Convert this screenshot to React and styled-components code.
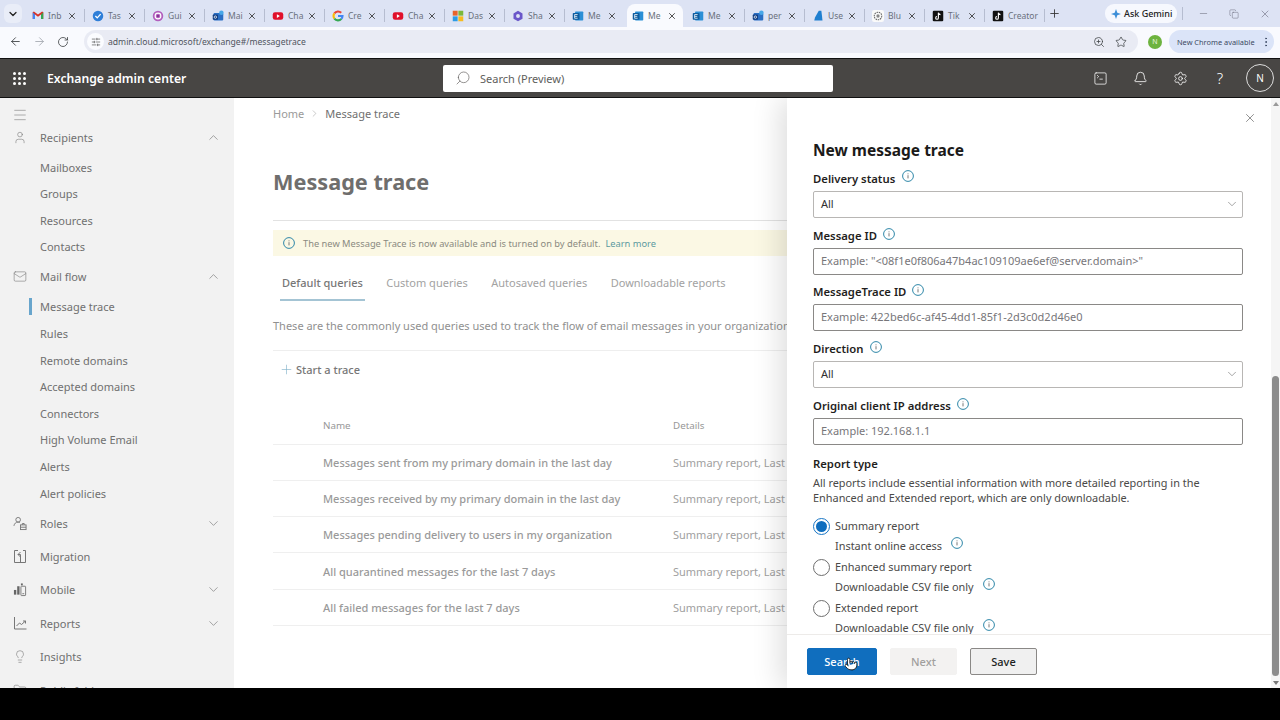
import React from "react";
import styled, { createGlobalStyle } from "styled-components";
import {
  ArrowLeft,
  ArrowRight,
  Bell,
  ChevronDown,
  ChevronUp,
  Copy,
  EllipsisVertical,
  Folder,
  Lightbulb,
  Mail,
  Menu,
  Minus,
  Plus,
  RotateCw,
  Search,
  Settings,
  SquareTerminal,
  Star,
  User,
  X,
  ZoomIn,
  ChevronRight,
  Pointer,
  SlidersHorizontal
} from "lucide-react";

const font = `"Noto Sans", "Open Sans", Arial, sans-serif`;

const GlobalStyle = createGlobalStyle`
  * {
    box-sizing: border-box;
  }

  html, body {
    margin: 0;
    height: 100%;
    overflow: hidden;
    background: #000;
  }

  body {
    font-family: ${font};
    font-size: 11px;
    color: #323130;
  }

  p, h1, h2 {
    margin: 0;
  }
`;

const Page = styled.div`
  display: flex;
  flex-direction: column;
  height: 720px;
  width: 1280px;
  background: #000;
`;

/* browser chrome */

const TabStrip = styled.div`
  align-items: flex-end;
  background: #dde3f4;
  display: flex;
  height: 27px;
  flex: none;
`;

const TabMenu = styled.div`
  align-items: center;
  align-self: center;
  background: #e9edf8;
  border-radius: 6px;
  color: #222;
  display: flex;
  height: 19px;
  justify-content: center;
  margin: 0 3px 0 4px;
  width: 18px;
`;

const Tab = styled.div`
  align-items: center;
  background: ${p => (p.$active ? "#f9fafe" : "transparent")};
  border-radius: 8px 8px 0 0;
  display: flex;
  height: 23px;
  margin-right: ${p => (p.$active ? "2px" : "0")};
  margin-left: ${p => (p.$active ? "2px" : "0")};
  padding-left: ${p => (p.$active ? "5px" : "7px")};
  position: relative;
  width: ${p => (p.$active ? "56px" : "60px")};

  &::after {
    background: #b6bdd0;
    content: "";
    display: ${p => (p.$sep ? "block" : "none")};
    height: 13px;
    position: absolute;
    right: 0;
    top: 5px;
    width: 1px;
  }
`;

const TabTitle = styled.span`
  color: #6a707c;
  font-size: 8.5px;
  margin-left: 4px;
  white-space: nowrap;
  width: ${p => (p.$wide ? "28px" : "13px")};
`;

const TabClose = styled(X)`
  color: #333;
  margin-left: 6px;
`;

const NewTab = styled.div`
  align-items: center;
  align-self: center;
  color: #333;
  display: flex;
  margin-left: 3px;
`;

const GeminiPill = styled.div`
  align-items: center;
  align-self: center;
  background: #f6f8fe;
  border-radius: 9px;
  color: #222;
  display: flex;
  font-size: 9px;
  font-weight: 500;
  gap: 3px;
  height: 19px;
  margin-left: 44px;
  padding-left: 6px;
  white-space: nowrap;
  width: 72px;
`;

const WindowButtons = styled.div`
  align-items: center;
  align-self: center;
  border-left: 1px solid #b6bdd0;
  color: #556;
  display: flex;
  gap: 20px;
  height: 13px;
  margin-left: 5px;
  padding-left: 15px;
`;

const Toolbar = styled.div`
  align-items: center;
  background: #f9fafe;
  display: flex;
  flex: none;
  height: 31px;
  padding: 3px 6px 5px 0;
`;

const NavButton = styled.div`
  color: ${p => (p.$off ? "#a4a8b0" : "#3c4043")};
  display: flex;
  justify-content: center;
  margin-left: ${p => (p.$first ? "3px" : "0")};
  width: 24px;
`;

const AddressBar = styled.div`
  align-items: center;
  background: #e9ebf4;
  border-radius: 12px;
  display: flex;
  flex: none;
  height: 23px;
  margin-left: 9px;
  padding-right: 11px;
  width: 1054px;
`;

const SiteInfo = styled.div`
  align-items: center;
  background: #fbfcff;
  border-radius: 50%;
  color: #444;
  display: flex;
  height: 17px;
  justify-content: center;
  margin: 0 4px 0 3px;
  width: 17px;
`;

const Url = styled.span`
  color: #50555e;
  flex: 1;
  font-size: 8.6px;
`;

const AddressIcon = styled.span`
  color: #3c4043;
  display: flex;
  margin-left: 10px;
`;

const ProfileDot = styled.div`
  align-items: center;
  background: #6db33f;
  border-radius: 50%;
  color: #e9f6df;
  display: flex;
  flex: none;
  font-size: 7px;
  height: 14px;
  justify-content: center;
  margin-left: 10px;
  width: 14px;
`;

const UpdatePill = styled.div`
  align-items: center;
  background: #dbe4f8;
  border-radius: 12px;
  color: #3b4a63;
  display: flex;
  flex: none;
  font-size: 7.4px;
  height: 23px;
  justify-content: space-between;
  margin-left: 7px;
  padding: 0 2px 0 8px;
  white-space: nowrap;
  width: 105px;
`;

/* exchange suite bar */

const SuiteBar = styled.header`
  align-items: center;
  background: #484644;
  border-bottom: 1px solid #111;
  border-top: 1px solid #111;
  color: #fff;
  display: flex;
  flex: none;
  height: 40px;
  position: relative;
`;

const Waffle = styled.div`
  display: grid;
  gap: 2px;
  grid-template-columns: repeat(3, 3px);
  margin-left: 13px;

  span {
    background: #fff;
    border-radius: 50%;
    height: 3px;
    width: 3px;
  }
`;

const AppName = styled.div`
  font-size: 12.2px;
  font-weight: 600;
  margin-left: 21px;
  width: 396px;
`;

const SearchBox = styled.div`
  align-items: center;
  background: #fff;
  border-radius: 2px;
  color: #605e5c;
  display: flex;
  font-size: 11px;
  gap: 9px;
  height: 27px;
  padding-left: 12px;
  width: 390px;
`;

const SearchGlass = styled(Search)`
  transform: scaleX(-1);
`;

const SuiteIcons = styled.div`
  align-items: center;
  display: flex;
  margin-left: auto;
  padding-right: 6px;
`;

const SuiteButton = styled.div`
  align-items: center;
  display: flex;
  font-size: 15px;
  font-weight: 300;
  justify-content: center;
  width: 40px;
`;

const Avatar = styled.div`
  align-items: center;
  border: 1px solid #ddd;
  border-radius: 50%;
  display: flex;
  font-size: 10px;
  height: 28px;
  justify-content: center;
  margin-left: 6px;
  width: 28px;
`;

/* page body */

const Body = styled.div`
  background: #fff;
  display: flex;
  flex: none;
  height: 590px;
  overflow: hidden;
  position: relative;
`;

const Sidebar = styled.nav`
  background: #f2f2f2;
  color: #707070;
  flex: none;
  height: 100%;
  overflow: hidden;
  width: 234px;
`;

const Burger = styled.div`
  color: #8a8a8a;
  height: 22.5px;
  padding: 9px 0 0 12px;
`;

const NavRow = styled.div`
  align-items: center;
  display: flex;
  height: 33.4px;
  padding: 0 13px 0 13px;
`;

const NavIcon = styled.span`
  color: #777;
  display: flex;
  justify-content: center;
  margin-right: 13px;
  width: 14px;
`;

const NavLabel = styled.span`
  flex: 1;
`;

const SubRow = styled.div`
  align-items: center;
  display: flex;
  height: 26.6px;
  padding-left: 29px;
`;

const ActiveMark = styled.span`
  background: ${p => (p.$on ? "#68a5cc" : "transparent")};
  height: 17px;
  margin-right: 8px;
  width: 3px;
`;

const Content = styled.main`
  flex: 1;
  min-width: 0;
  overflow: hidden;
  padding: 5px 0 0 39px;
  color: #7c7c7c;
`;

const Breadcrumb = styled.div`
  align-items: center;
  display: flex;
  gap: 5px;
  height: 20px;
  color: #8c8c8c;
`;

const Crumb = styled.span`
  color: ${p => (p.$current ? "#707070" : "#9a9a9a")};
`;

const PageTitle = styled.h1`
  color: #6f6e6d;
  font-size: 21.7px;
  font-weight: 700;
  line-height: 32px;
  margin-top: 43px;
`;

const Rule = styled.div`
  background: #e2e2e2;
  height: 1px;
`;

const TitleRule = styled(Rule)`
  margin-top: 22px;
`;

const Banner = styled.div`
  align-items: center;
  background: #fbf8e4;
  color: #8a8a80;
  display: flex;
  font-size: 9.3px;
  gap: 8px;
  height: 26px;
  margin-top: 9px;
  padding-left: 10px;
`;

const BannerLink = styled.span`
  color: #5b9a9f;
  margin-left: -3px;
`;

const Tabs = styled.div`
  display: flex;
  gap: 19.5px;
  margin-top: 14px;
  padding-left: 7px;
`;

const TabLink = styled.div`
  border-bottom: 2px solid ${p => (p.$active ? "#a4c4d4" : "transparent")};
  color: ${p => (p.$active ? "#777" : "#a2a2a2")};
  font-weight: ${p => (p.$active ? 500 : 400)};
  height: 31px;
  line-height: 26px;
  padding: 0 2px;
  white-space: nowrap;
`;

const Description = styled.p`
  line-height: 20px;
  margin-top: 15px;
  white-space: nowrap;
  color: #909090;
`;

const DescRule = styled(Rule)`
  background: #eee;
  margin-top: 14px;
`;

const StartTrace = styled.div`
  align-items: center;
  color: #777;
  display: flex;
  font-weight: 500;
  gap: 2px;
  height: 36px;
  padding-left: 6px;
`;

const TableRow = styled.div`
  align-items: center;
  border-bottom: 1px solid #efefef;
  display: grid;
  grid-template-columns: 350px 1fr;
  height: ${p => (p.$head ? "36.6px" : "36.3px")};
  padding-left: 50px;
  white-space: nowrap;
`;

const TableHead = styled(TableRow)`
  color: #979797;
  font-size: 9.8px;
  margin-top: 21px;
`;

const QueryName = styled.span`
  color: #9a9a9a;
  font-weight: 500;
`;

const QueryDetail = styled.span`
  color: #a0a0a0;
`;

/* side panel, it lies over the page */

const Panel = styled.aside`
  background: #fff;
  bottom: 0;
  box-shadow: -6px 0 28px rgba(0, 0, 0, 0.14);
  display: flex;
  left: 787px;
  position: absolute;
  right: 0;
  top: 0;
`;

const PanelMain = styled.div`
  display: flex;
  flex: 1;
  flex-direction: column;
  min-width: 0;
`;

const PanelBody = styled.div`
  flex: 1;
  min-height: 0;
  overflow: hidden;
  padding: 0 28px 0 26px;
`;

const CloseRow = styled.div`
  color: #444;
  display: flex;
  height: 38px;
  justify-content: flex-end;
  margin-right: -14px;
  padding-top: 13px;
`;

const PanelTitle = styled.h2`
  color: #1b1a19;
  font-size: 15.5px;
  font-weight: 700;
  line-height: 28px;
`;

const Field = styled.div`
  margin-top: ${p => (p.$first ? "3px" : "5.7px")};
`;

const LabelRow = styled.div`
  align-items: center;
  color: #1f1e1d;
  display: flex;
  font-size: 11.3px;
  font-weight: 600;
  gap: ${p => p.$gap || 6}px;
  height: 24px;
  padding-bottom: 1px;
`;

const InfoMark = styled.svg`
  flex: none;
  margin-top: ${p => p.$up || 0}px;
`;

const Control = styled.div`
  align-items: center;
  border: 1px solid ${p => (p.$select ? "#b8b6b4" : "#8a8886")};
  border-radius: 2px;
  color: ${p => (p.$select ? "#323130" : "#77767a")};
  display: flex;
  font-size: 11px;
  height: 27px;
  justify-content: space-between;
  padding: 0 3px 2px 7px;
  white-space: nowrap;
`;

const ReportHeading = styled.div`
  color: #1f1e1d;
  font-size: 11.3px;
  font-weight: 600;
  line-height: 20px;
  margin-top: 9px;
`;

const ReportText = styled.p`
  color: #4a4948;
  font-size: 10.9px;
  line-height: 15.4px;
  margin-top: 1px;
`;

const RadioGroup = styled.div`
  margin-top: 10px;
`;

const RadioOption = styled.div`
  display: grid;
  grid-template-columns: 17px 1fr;
  column-gap: 5px;
  height: 41px;
`;

const RadioDot = styled.span`
  align-items: center;
  border: 1px solid ${p => (p.$on ? "#1976c5" : "#6e6e6e")};
  border-radius: 50%;
  display: flex;
  height: 17px;
  justify-content: center;
  margin-top: 2px;
  width: 17px;

  &::after {
    background: #106ebe;
    border-radius: 50%;
    content: "";
    display: ${p => (p.$on ? "block" : "none")};
    height: 11px;
    width: 11px;
  }
`;

const RadioLine = styled.div`
  align-items: center;
  color: #4a4948;
  display: flex;
  font-size: 10.9px;
  gap: 9.5px;
  height: 20px;
`;

const PanelFooter = styled.div`
  border-top: 1px solid #edebe9;
  display: flex;
  flex: none;
  height: 54px;
  padding: 13px 0 0 20px;
  position: relative;
`;

const Button = styled.div`
  align-items: center;
  background: ${p => (p.$primary ? "#106ebe" : p.$disabled ? "#f3f2f1" : "#f0f0f0")};
  border: 1px solid ${p => (p.$primary ? "#106ebe" : p.$disabled ? "#f3f2f1" : "#8a8886")};
  border-radius: 2px;
  color: ${p => (p.$primary ? "#fff" : p.$disabled ? "#a19f9d" : "#201f1e")};
  display: flex;
  font-size: 11px;
  font-weight: 500;
  height: 27px;
  justify-content: center;
  margin-right: ${p => p.$gap}px;
  width: ${p => p.$w}px;
`;

const HandCursor = styled(Pointer)`
  left: 57px;
  position: absolute;
  top: 22px;
`;

const Scrollbar = styled.div`
  background: #f5f5f5;
  color: #6e6e6e;
  flex: none;
  position: relative;
  width: 9px;
`;

const Thumb = styled.div`
  background: #8c8c8c;
  border-radius: 4px;
  height: 300px;
  margin: 278px auto 0;
  width: 7px;
`;

const ScrollArrow = styled.span`
  border-left: 3px solid transparent;
  border-right: 3px solid transparent;
  left: 1.5px;
  position: absolute;
  ${p =>
    p.$down
      ? "border-top: 4px solid #777; bottom: 3px;"
      : "border-bottom: 4px solid #999; top: 4px;"}
`;

/* favicons and small logos */

const Favicon = ({ kind }) => {
  const shapes = {
    gmail: (
      <>
        <path d="M1 3v9h3V6l4 3 4-3v6h3V3l-1.500-1L8 6 2.500 2z" fill="#d93025" />
        <path d="M1 3v9h3V6z" fill="#4285f4" />
        <path d="M15 3v9h-3V6z" fill="#34a853" />
      </>
    ),
    check: (
      <>
        <circle cx="8" cy="8" r="7" fill="#2f7fd8" />
        <path d="M4.500 8l2.500 2.500 4.500-5" fill="none" stroke="#fff" strokeWidth="1.800" />
      </>
    ),
    guru: (
      <>
        <circle cx="8" cy="8" r="7" fill="#b25fbd" />
        <circle cx="8" cy="8" r="3.800" fill="none" stroke="#fff" strokeWidth="1.600" />
        <circle cx="8" cy="8" r="1.400" fill="#7b2d8b" />
      </>
    ),
    outlook: (
      <>
        <rect x="2" y="4" width="13" height="10" rx="1.500" fill="#2a6fc4" />
        <rect x="1" y="6" width="7" height="7" rx="1" fill="#123f83" />
        <circle cx="4.500" cy="9.500" r="1.600" fill="none" stroke="#fff" />
        <circle cx="12.500" cy="3.500" r="3" fill="#47a7e8" />
      </>
    ),
    youtube: (
      <>
        <rect x="1" y="3" width="14" height="10" rx="3" fill="#e0102a" />
        <path d="M6.500 5.500v5l4-2.500z" fill="#fff" />
      </>
    ),
    google: (
      <g fill="none" strokeWidth="2.800">
        <path d="M12.300 3.800A6 6 0 0 0 3.200 4.600" stroke="#ea4335" />
        <path d="M3.200 4.600a6 6 0 0 0 0 6.800" stroke="#fbbc05" />
        <path d="M3.200 11.400a6 6 0 0 0 9.300 .4" stroke="#34a853" />
        <path d="M12.500 11.800A6 6 0 0 0 14 8H8" stroke="#4285f4" />
      </g>
    ),
    squares: (
      <>
        <rect x="1" y="1" width="6.500" height="6.500" fill="#e8632b" />
        <rect x="8.500" y="1" width="6.500" height="6.500" fill="#7cb83a" />
        <rect x="1" y="8.500" width="6.500" height="6.500" fill="#2c9be5" />
        <rect x="8.500" y="8.500" width="6.500" height="6.500" fill="#f7bb1e" />
      </>
    ),
    gear: (
      <>
        <path d="M8 1l6 3.500v7L8 15l-6-3.500v-7z" fill="#6a56c9" />
        <circle cx="8" cy="8" r="2.600" fill="#dde3f4" />
      </>
    ),
    exchange: (
      <>
        <rect x="4" y="2" width="11" height="12" rx="1" fill="#2b8fd6" />
        <rect x="1" y="4" width="9" height="9" rx="1" fill="#0f5c9e" />
        <path d="M3.500 6h4M3.500 8.500h3.500M3.500 11h4M3.500 6v5" stroke="#fff" fill="none" />
      </>
    ),
    azure: <path d="M9 1h3.500l1.500 13H3l1-4z" fill="#1f7fd0" />,
    knot: (
      <>
        <rect x="0" y="0" width="16" height="16" rx="3" fill="#fafafa" />
        <circle cx="8" cy="8" r="5" fill="none" stroke="#666" strokeWidth="1.400" strokeDasharray="2 1" />
        <circle cx="8" cy="8" r="2.200" fill="#888" />
      </>
    ),
    tiktok: (
      <>
        <rect x="1" y="1" width="14" height="14" rx="1.500" fill="#111" />
        <path d="M8.500 3.500v7a1.800 1.800 0 1 1-1.800-1.800M8.500 3.500c.3 1.500 1.300 2.400 2.800 2.600" fill="none" stroke="#fff" strokeWidth="1.500" />
      </>
    )
  };
  return (
    <svg width="12" height="12" viewBox="0 0 16 16" style={{ flex: "none" }}>
      {shapes[kind]}
    </svg>
  );
};

const Info = ({ size = 12, up }) => (
  <InfoMark $up={up} width={size} height={size} viewBox="0 0 12 12">
    <circle cx="6" cy="6" r="5.400" fill="none" stroke="#2f87a8" />
    <path d="M6 5.200v3.200M6 3.400v.9" stroke="#777" />
  </InfoMark>
);

const RolesIcon = () => (
  <svg width="15" height="15" viewBox="0 0 15 15" fill="none" stroke="#777">
    <circle cx="5.500" cy="3.500" r="2.500" />
    <path d="M1 10c.5-2.500 2-4 4.500-4 .8 0 1.500.2 2 .5" />
    <rect x="8" y="9" width="6" height="5" />
    <path d="M10 9V7.500h2V9M8 11.500h6" />
  </svg>
);

const MigrationIcon = () => (
  <svg width="14" height="15" viewBox="0 0 14 15" fill="none" stroke="#777">
    <path d="M5 1.500H1.500v12h11v-12H10" />
    <path d="M7.500 13.500V5.500M7.500 5.500L5 5.500M7.500 3L5 5.500l2.500 2.500" />
  </svg>
);

const MobileIcon = () => (
  <svg width="15" height="15" viewBox="0 0 15 15" fill="none" stroke="#777">
    <rect x="8.500" y="4" width="5" height="10" rx="0.500" />
    <path d="M10 12h2" />
    <rect x="1" y="8" width="2.500" height="5" fill="#666" stroke="none" />
    <rect x="4.500" y="4" width="2.500" height="9" fill="#666" stroke="none" />
    <rect x="8.500" y="1" width="2" height="2" fill="#666" stroke="none" />
  </svg>
);

const ReportsIcon = () => (
  <svg width="14" height="14" viewBox="0 0 14 14" fill="none" stroke="#777">
    <path d="M1.500 1v12h12" />
    <path d="M3.500 10l3-3 2 1.500L12.500 5M10 5h2.500v2.500" />
  </svg>
);

const tabs = [
  ["gmail", "Inb"],
  ["check", "Tas"],
  ["guru", "Gui"],
  ["outlook", "Mai"],
  ["youtube", "Cha"],
  ["google", "Cre"],
  ["youtube", "Cha"],
  ["squares", "Das"],
  ["gear", "Sha"],
  ["exchange", "Me"],
  ["exchange", "Me"],
  ["exchange", "Me"],
  ["outlook", "per"],
  ["azure", "Use"],
  ["knot", "Blu"],
  ["tiktok", "Tik"],
  ["tiktok", "Creator"]
];

const recipients = ["Mailboxes", "Groups", "Resources", "Contacts"];
const mailFlow = [
  "Message trace",
  "Rules",
  "Remote domains",
  "Accepted domains",
  "Connectors",
  "High Volume Email",
  "Alerts",
  "Alert policies"
];
const queries = [
  "Messages sent from my primary domain in the last day",
  "Messages received by my primary domain in the last day",
  "Messages pending delivery to users in my organization",
  "All quarantined messages for the last 7 days",
  "All failed messages for the last 7 days"
];
const reportOptions = [
  ["Summary report", "Instant online access", true],
  ["Enhanced summary report", "Downloadable CSV file only", false],
  ["Extended report", "Downloadable CSV file only", false]
];

const thin = { strokeWidth: 1 };

const NavHead = ({ icon, label, open }) => (
  <NavRow>
    <NavIcon>{icon}</NavIcon>
    <NavLabel>{label}</NavLabel>
    {open === true && <ChevronUp size={15} {...thin} />}
    {open === false && <ChevronDown size={15} {...thin} />}
  </NavRow>
);

const Chrome = () => (
  <>
    <TabStrip>
      <TabMenu>
        <ChevronDown size={12} strokeWidth={2.5} />
      </TabMenu>
      {tabs.map(([kind, title], i) => (
        <Tab key={i} $active={i === 10} $sep={i !== 9 && i !== 10}>
          <Favicon kind={kind} />
          <TabTitle $wide={i === 16}>{title}</TabTitle>
          {i !== 16 && <TabClose size={10} strokeWidth={2} />}
        </Tab>
      ))}
      <NewTab>
        <Plus size={13} strokeWidth={1.6} />
      </NewTab>
      <GeminiPill>
        <svg width="10" height="10" viewBox="0 0 10 10">
          <path d="M5 0l1.300 3.700L10 5 6.300 6.300 5 10 3.700 6.300 0 5l3.700-1.300z" fill="#3d8fd8" />
        </svg>
        Ask Gemini
      </GeminiPill>
      <WindowButtons>
        <Minus size={11} {...thin} />
        <Copy size={10} {...thin} />
        <X size={12} {...thin} />
      </WindowButtons>
    </TabStrip>
    <Toolbar>
      <NavButton $first>
        <ArrowLeft size={13} strokeWidth={1.6} />
      </NavButton>
      <NavButton $off>
        <ArrowRight size={13} strokeWidth={1.6} />
      </NavButton>
      <NavButton>
        <RotateCw size={12} strokeWidth={1.6} />
      </NavButton>
      <AddressBar>
        <SiteInfo>
          <SlidersHorizontal size={10} strokeWidth={1.5} />
        </SiteInfo>
        <Url>admin.cloud.microsoft/exchange#/messagetrace</Url>
        <AddressIcon>
          <ZoomIn size={12} strokeWidth={1.5} />
        </AddressIcon>
        <AddressIcon>
          <Star size={12} strokeWidth={1.5} />
        </AddressIcon>
      </AddressBar>
      <ProfileDot>N</ProfileDot>
      <UpdatePill>
        New Chrome available
        <EllipsisVertical size={12} strokeWidth={1.8} />
      </UpdatePill>
    </Toolbar>
    <SuiteBar>
      <Waffle>
        {Array.from({ length: 9 }, (_, i) => (
          <span key={i} />
        ))}
      </Waffle>
      <AppName>Exchange admin center</AppName>
      <SearchBox>
        <SearchGlass size={16} {...thin} />
        Search (Preview)
      </SearchBox>
      <SuiteIcons>
        <SuiteButton>
          <SquareTerminal size={15} strokeWidth={1.2} />
        </SuiteButton>
        <SuiteButton>
          <Bell size={15} strokeWidth={1.3} />
        </SuiteButton>
        <SuiteButton>
          <Settings size={15} strokeWidth={1.3} />
        </SuiteButton>
        <SuiteButton>?</SuiteButton>
        <Avatar>N</Avatar>
      </SuiteIcons>
    </SuiteBar>
  </>
);

const Navigation = () => (
  <Sidebar>
    <Burger>
      <Menu size={16} {...thin} />
    </Burger>
    <NavHead icon={<User size={15} {...thin} />} label="Recipients" open />
    {recipients.map(name => (
      <SubRow key={name}>
        <ActiveMark />
        {name}
      </SubRow>
    ))}
    <NavHead icon={<Mail size={15} {...thin} />} label="Mail flow" open />
    {mailFlow.map((name, i) => (
      <SubRow key={name}>
        <ActiveMark $on={i === 0} />
        {name}
      </SubRow>
    ))}
    <NavHead icon={<RolesIcon />} label="Roles" open={false} />
    <NavHead icon={<MigrationIcon />} label="Migration" />
    <NavHead icon={<MobileIcon />} label="Mobile" open={false} />
    <NavHead icon={<ReportsIcon />} label="Reports" open={false} />
    <NavHead icon={<Lightbulb size={15} {...thin} />} label="Insights" />
    <NavHead icon={<Folder size={15} {...thin} />} label="Public folders" />
  </Sidebar>
);

const TraceContent = () => (
  <Content>
    <Breadcrumb>
      <Crumb>Home</Crumb>
      <ChevronRight size={11} {...thin} />
      <Crumb $current>Message trace</Crumb>
    </Breadcrumb>
    <PageTitle>Message trace</PageTitle>
    <TitleRule />
    <Banner>
      <Info size={12} />
      The new Message Trace is now available and is turned on by default.
      <BannerLink>Learn more</BannerLink>
    </Banner>
    <Tabs>
      <TabLink $active>Default queries</TabLink>
      <TabLink>Custom queries</TabLink>
      <TabLink>Autosaved queries</TabLink>
      <TabLink>Downloadable reports</TabLink>
    </Tabs>
    <Description>
      These are the commonly used queries used to track the flow of email messages in your organization.
    </Description>
    <DescRule />
    <StartTrace>
      <Plus size={15} color="#7fb0c9" {...thin} />
      Start a trace
    </StartTrace>
    <TableHead $head>
      <span>Name</span>
      <span>Details</span>
    </TableHead>
    {queries.map(name => (
      <TableRow key={name}>
        <QueryName>{name}</QueryName>
        <QueryDetail>Summary report, Last day</QueryDetail>
      </TableRow>
    ))}
  </Content>
);

const SelectField = ({ label, gap, up, first }) => (
  <Field $first={first}>
    <LabelRow $gap={gap}>
      {label}
      <Info up={up} />
    </LabelRow>
    <Control $select>
      All
      <ChevronDown size={14} color="#666" {...thin} />
    </Control>
  </Field>
);

const InputField = ({ label, hint }) => (
  <Field>
    <LabelRow>
      {label}
      <Info up={-3} />
    </LabelRow>
    <Control>{hint}</Control>
  </Field>
);

const TracePanel = () => (
  <Panel>
    <PanelMain>
      <PanelBody>
        <CloseRow>
          <X size={14} {...thin} />
        </CloseRow>
        <PanelTitle>New message trace</PanelTitle>
        <SelectField label="Delivery status" gap={7} up={-5} first />
        <InputField
          label="Message ID"
          hint={'Example: "<08f1e0f806a47b4ac109109ae6ef@server.domain>"'}
        />
        <InputField label="MessageTrace ID" hint="Example: 422bed6c-af45-4dd1-85f1-2d3c0d2d46e0" />
        <SelectField label="Direction" gap={7} up={-3} />
        <InputField label="Original client IP address" hint="Example: 192.168.1.1" />
        <ReportHeading>Report type</ReportHeading>
        <ReportText>
          All reports include essential information with more detailed reporting in the Enhanced and Extended
          report, which are only downloadable.
        </ReportText>
        <RadioGroup>
          {reportOptions.map(([title, note, on]) => (
            <RadioOption key={title}>
              <RadioDot $on={on} />
              <div>
                <RadioLine>{title}</RadioLine>
                <RadioLine>
                  {note}
                  <Info up={-6} />
                </RadioLine>
              </div>
            </RadioOption>
          ))}
        </RadioGroup>
      </PanelBody>
      <PanelFooter>
        <Button $primary $w={70} $gap={13}>
          Search
        </Button>
        <Button $disabled $w={67} $gap={13}>
          Next
        </Button>
        <Button $w={67} $gap={0}>
          Save
        </Button>
        <HandCursor size={14} fill="#fff" color="#111" strokeWidth={1.4} />
      </PanelFooter>
    </PanelMain>
    <Scrollbar>
      <ScrollArrow />
      <Thumb />
      <ScrollArrow $down />
    </Scrollbar>
  </Panel>
);

const App = () => (
  <Page>
    <GlobalStyle />
    <Chrome />
    <Body>
      <Navigation />
      <TraceContent />
      <TracePanel />
    </Body>
  </Page>
);

export default App;
